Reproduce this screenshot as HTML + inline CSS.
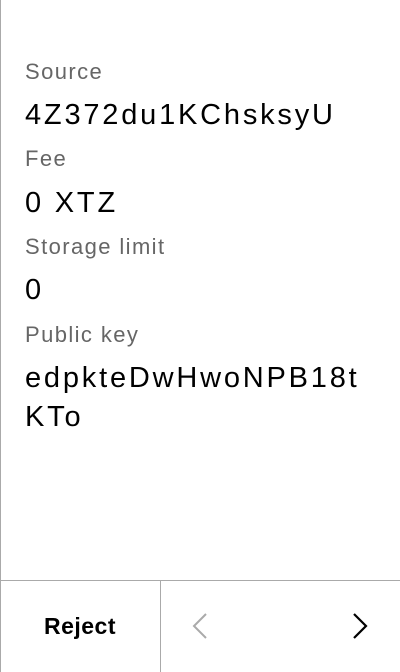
<!DOCTYPE html>
<html><head><style>
html,body{margin:0;padding:0;background:#fff;}
body{width:400px;height:672px;position:relative;overflow:hidden;font-family:"Liberation Sans",sans-serif;}
.lb{position:absolute;left:0;top:0;width:1px;height:672px;background:#aaa;}
.t{position:absolute;left:25px;white-space:nowrap;}
.l{font-size:22px;color:#666;line-height:24px;letter-spacing:1.4px;}
.v{font-size:29px;color:#000;line-height:32px;letter-spacing:2.8px;}
.hl{position:absolute;left:0;top:580px;width:400px;height:1px;background:#aaa;}
.vl{position:absolute;left:160px;top:580px;width:1px;height:92px;background:#aaa;}
.rej{position:absolute;left:0;width:160px;top:611px;text-align:center;font-size:23px;font-weight:bold;line-height:30px;letter-spacing:0.5px;}
</style></head><body>
<div class="lb"></div>
<div class="t l" style="top:60px">Source</div>
<div class="t v" style="top:99px">4Z372du1KChsksyU</div>
<div class="t l" style="top:147px">Fee</div>
<div class="t v" style="top:187px">0 XTZ</div>
<div class="t l" style="top:235px">Storage limit</div>
<div class="t v" style="top:274px">0</div>
<div class="t l" style="top:323px">Public key</div>
<div class="t v" style="top:362px">edpkteDwHwoNPB18t</div>
<div class="t v" style="top:401px">KTo</div>
<div class="hl"></div><div class="vl"></div>
<div class="rej">Reject</div>
<svg style="position:absolute;left:190px;top:612px" width="20" height="28"><path d="M16 2 L4 14 L16 26" fill="none" stroke="#aaa" stroke-width="2"/></svg>
<svg style="position:absolute;left:350px;top:612px" width="20" height="28"><path d="M4 2 L16 14 L4 26" fill="none" stroke="#000" stroke-width="2.2"/></svg>
</body></html>
